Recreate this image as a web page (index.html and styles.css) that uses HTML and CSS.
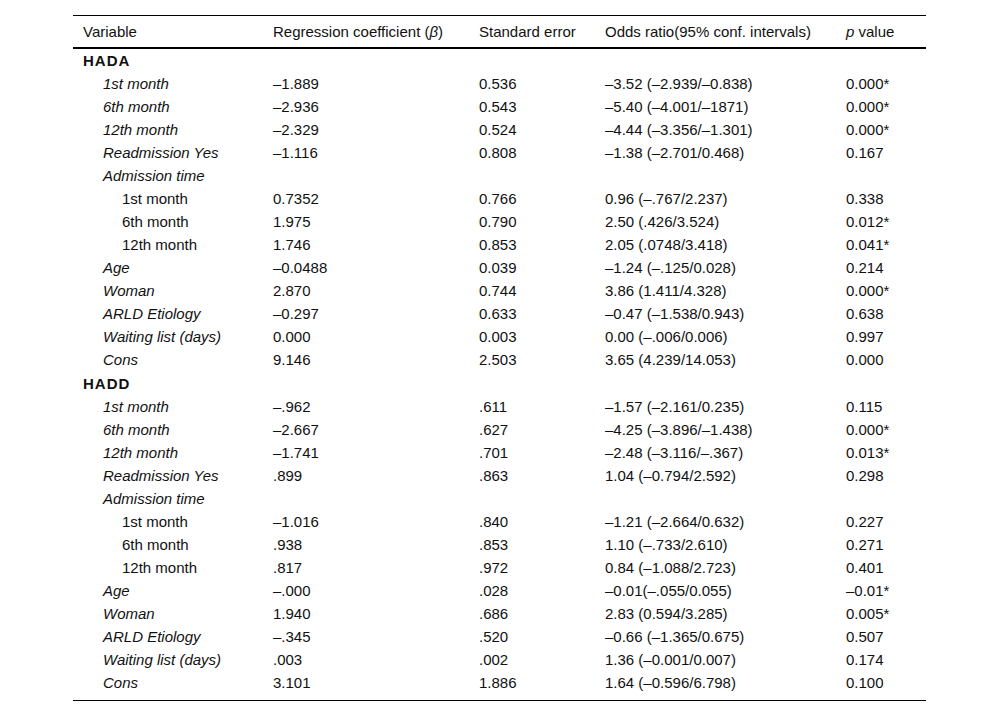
FILE: index.html
```html
<!DOCTYPE html>
<html lang="en">
<head>
<meta charset="utf-8">
<title>Regression table</title>
<link rel="stylesheet" href="styles.css">
</head>
<body>
<div class="wrap">
<table class="tbl">
  <colgroup>
    <col class="c1"><col class="c2"><col class="c3"><col class="c4"><col class="c5">
  </colgroup>
  <thead>
    <tr>
      <th>Variable</th>
      <th>Regression coefficient (<i>β</i>)</th>
      <th>Standard error</th>
      <th>Odds ratio(95% conf. intervals)</th>
      <th><i>p</i> value</th>
    </tr>
  </thead>
  <tbody>
    <tr class="sec first"><td>HADA</td><td></td><td></td><td></td><td></td></tr>
    <tr><td class="l1">1st month</td><td>–1.889</td><td>0.536</td><td>–3.52 (–2.939/–0.838)</td><td>0.000*</td></tr>
    <tr><td class="l1">6th month</td><td>–2.936</td><td>0.543</td><td>–5.40 (–4.001/–1871)</td><td>0.000*</td></tr>
    <tr><td class="l1">12th month</td><td>–2.329</td><td>0.524</td><td>–4.44 (–3.356/–1.301)</td><td>0.000*</td></tr>
    <tr><td class="l1">Readmission Yes</td><td>–1.116</td><td>0.808</td><td>–1.38 (–2.701/0.468)</td><td>0.167</td></tr>
    <tr><td class="l1">Admission time</td><td></td><td></td><td></td><td></td></tr>
    <tr><td class="l2">1st month</td><td>0.7352</td><td>0.766</td><td>0.96 (–.767/2.237)</td><td>0.338</td></tr>
    <tr><td class="l2">6th month</td><td>1.975</td><td>0.790</td><td>2.50 (.426/3.524)</td><td>0.012*</td></tr>
    <tr><td class="l2">12th month</td><td>1.746</td><td>0.853</td><td>2.05 (.0748/3.418)</td><td>0.041*</td></tr>
    <tr><td class="l1">Age</td><td>–0.0488</td><td>0.039</td><td>–1.24 (–.125/0.028)</td><td>0.214</td></tr>
    <tr><td class="l1">Woman</td><td>2.870</td><td>0.744</td><td>3.86 (1.411/4.328)</td><td>0.000*</td></tr>
    <tr><td class="l1">ARLD Etiology</td><td>–0.297</td><td>0.633</td><td>–0.47 (–1.538/0.943)</td><td>0.638</td></tr>
    <tr><td class="l1">Waiting list (days)</td><td>0.000</td><td>0.003</td><td>0.00 (–.006/0.006)</td><td>0.997</td></tr>
    <tr><td class="l1">Cons</td><td>9.146</td><td>2.503</td><td>3.65 (4.239/14.053)</td><td>0.000</td></tr>
    <tr class="sec"><td>HADD</td><td></td><td></td><td></td><td></td></tr>
    <tr><td class="l1">1st month</td><td>–.962</td><td>.611</td><td>–1.57 (–2.161/0.235)</td><td>0.115</td></tr>
    <tr><td class="l1">6th month</td><td>–2.667</td><td>.627</td><td>–4.25 (–3.896/–1.438)</td><td>0.000*</td></tr>
    <tr><td class="l1">12th month</td><td>–1.741</td><td>.701</td><td>–2.48 (–3.116/–.367)</td><td>0.013*</td></tr>
    <tr><td class="l1">Readmission Yes</td><td>.899</td><td>.863</td><td>1.04 (–0.794/2.592)</td><td>0.298</td></tr>
    <tr><td class="l1">Admission time</td><td></td><td></td><td></td><td></td></tr>
    <tr><td class="l2">1st month</td><td>–1.016</td><td>.840</td><td>–1.21 (–2.664/0.632)</td><td>0.227</td></tr>
    <tr><td class="l2">6th month</td><td>.938</td><td>.853</td><td>1.10 (–.733/2.610)</td><td>0.271</td></tr>
    <tr><td class="l2">12th month</td><td>.817</td><td>.972</td><td>0.84 (–1.088/2.723)</td><td>0.401</td></tr>
    <tr><td class="l1">Age</td><td>–.000</td><td>.028</td><td>–0.01(–.055/0.055)</td><td>–0.01*</td></tr>
    <tr><td class="l1">Woman</td><td>1.940</td><td>.686</td><td>2.83 (0.594/3.285)</td><td>0.005*</td></tr>
    <tr><td class="l1">ARLD Etiology</td><td>–.345</td><td>.520</td><td>–0.66 (–1.365/0.675)</td><td>0.507</td></tr>
    <tr><td class="l1">Waiting list (days)</td><td>.003</td><td>.002</td><td>1.36 (–0.001/0.007)</td><td>0.174</td></tr>
    <tr class="last"><td class="l1">Cons</td><td>3.101</td><td>1.886</td><td>1.64 (–0.596/6.798)</td><td>0.100</td></tr>
  </tbody>
</table>
</div>
</body>
</html>
```
FILE: styles.css
```css
html, body {
  margin: 0;
  padding: 0;
  background: #fff;
}
.wrap {
  padding: 15px 0 0 73px;
}
.tbl {
  width: 853px;
  border-collapse: collapse;
  table-layout: fixed;
  font-family: "Liberation Sans", Arial, sans-serif;
  font-size: 15px;
  color: #111;
  border-top: 1px solid #000;
  border-bottom: 1px solid #000;
}
.c1 { width: 190px; }
.c2 { width: 206px; }
.c3 { width: 126px; }
.c4 { width: 241px; }
.c5 { width: 90px; }
.tbl th {
  font-weight: normal;
  text-align: left;
  padding: 4px 0 4px 10px;
  height: 23px;
  line-height: 23px;
  border-bottom: 2px solid #000;
  white-space: nowrap;
}
.tbl td {
  padding: 0 0 0 10px;
  height: 23px;
  line-height: 23px;
  white-space: nowrap;
}
.tbl .sec td {
  font-weight: bold;
  letter-spacing: 1px;
  padding-top: 1px;
}
.tbl .sec.first td {
  padding-top: 0;
}
.tbl td.l1 {
  padding-left: 30px;
  font-style: italic;
}
.tbl td.l2 {
  padding-left: 49px;
}
.tbl .last td {
  padding-bottom: 6px;
}
```
